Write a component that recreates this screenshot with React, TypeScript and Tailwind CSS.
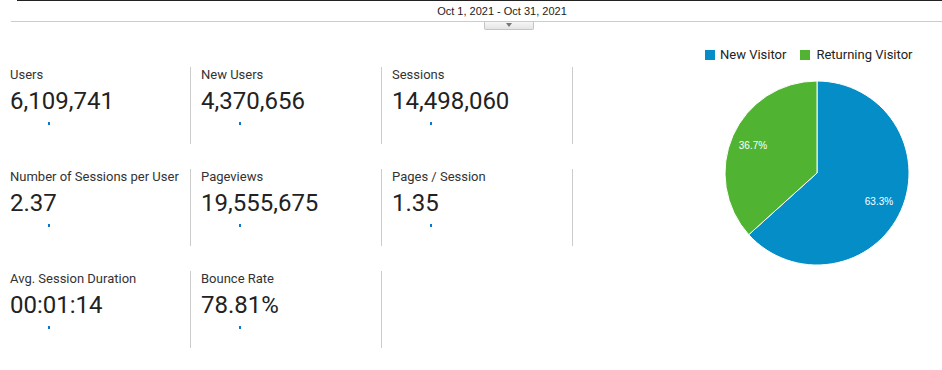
import React from "react";

interface Metric {
  label: string;
  value: string;
}

const rows: Metric[][] = [
  [
    { label: "Users", value: "6,109,741" },
    { label: "New Users", value: "4,370,656" },
    { label: "Sessions", value: "14,498,060" },
  ],
  [
    { label: "Number of Sessions per User", value: "2.37" },
    { label: "Pageviews", value: "19,555,675" },
    { label: "Pages / Session", value: "1.35" },
  ],
  [
    { label: "Avg. Session Duration", value: "00:01:14" },
    { label: "Bounce Rate", value: "78.81%" },
  ],
];

function MetricCell({ m }: { m: Metric }) {
  return (
    <div className="w-[191px] h-[77px] border-r border-[#cccccc] pl-[10px]">
      <div className="text-[13px] leading-[15px] text-[#333333]">{m.label}</div>
      <div className="mt-[5px] text-[24px] leading-[28px] text-[#222222]">{m.value}</div>
      {/* sparkline placeholder: single point */}
      <div className="mt-[7px] ml-[38px] w-[2px] h-[3px] bg-[#0a7ac6]" />
    </div>
  );
}

function Pie() {
  return (
    <svg width="200" height="200" viewBox="0 0 200 200">
      <path
        d="M100,100 L100,8 A92,92 0 1,1 31.74,161.68 Z"
        fill="#058dc7"
        stroke="#ffffff"
        strokeWidth="1"
      />
      <path
        d="M100,100 L31.74,161.68 A92,92 0 0,1 100,8 Z"
        fill="#50b432"
        stroke="#ffffff"
        strokeWidth="1"
      />
      <text
        x="162"
        y="132"
        fill="#ffffff"
        fontSize="10"
        textAnchor="middle"
        fontFamily="'Liberation Sans', Arial, sans-serif"
      >
        63.3%
      </text>
      <text
        x="36"
        y="76"
        fill="#ffffff"
        fontSize="10"
        textAnchor="middle"
        fontFamily="'Liberation Sans', Arial, sans-serif"
      >
        36.7%
      </text>
    </svg>
  );
}

export default function App() {
  return (
    <div className="w-[942px] h-[370px] bg-white overflow-hidden font-['Roboto',sans-serif]">
      {/* date range header */}
      <div className="ml-[17px] h-[1px] bg-[#222222]" />
      <div className="h-[20px] flex justify-center pl-[62px]">
        <span className="pt-[4px] text-[11px] leading-[13px] text-[#222222] font-['Liberation_Sans',Arial,sans-serif]">
          Oct 1, 2021 - Oct 31, 2021
        </span>
      </div>
      <div className="ml-[11px] h-[1px] bg-[#cccccc]" />
      <div className="flex justify-center pl-[76px]">
        <div className="w-[50px] h-[8px] border border-t-0 border-[#c4c4c4] bg-gradient-to-b from-[#f6f6f6] to-[#e4e4e4] rounded-b-[2px] flex justify-center pt-[1px]">
          <div className="w-0 h-0 border-l-[3px] border-r-[3px] border-t-[4px] border-l-transparent border-r-transparent border-t-[#777777]" />
        </div>
      </div>

      <div className="flex">
        {/* metrics */}
        <div className="pt-[37px] flex flex-col gap-[25px]">
          {rows.map((row, i) => (
            <div key={i} className="flex">
              {row.map((m) => (
                <MetricCell key={m.label} m={m} />
              ))}
            </div>
          ))}
        </div>

        {/* visitor pie */}
        <div className="flex-1 flex flex-col">
          <div className="mt-[17px] ml-[132px] flex items-center text-[13px] leading-[15px] text-[#222222]">
            <span className="w-[10px] h-[10px] bg-[#058dc7]" />
            <span className="ml-[5px]">New Visitor</span>
            <span className="ml-[14px] w-[10px] h-[10px] bg-[#50b432]" />
            <span className="ml-[6px]">Returning Visitor</span>
          </div>
          <div className="mt-[11px] ml-[144px]">
            <Pie />
          </div>
        </div>
      </div>
    </div>
  );
}
